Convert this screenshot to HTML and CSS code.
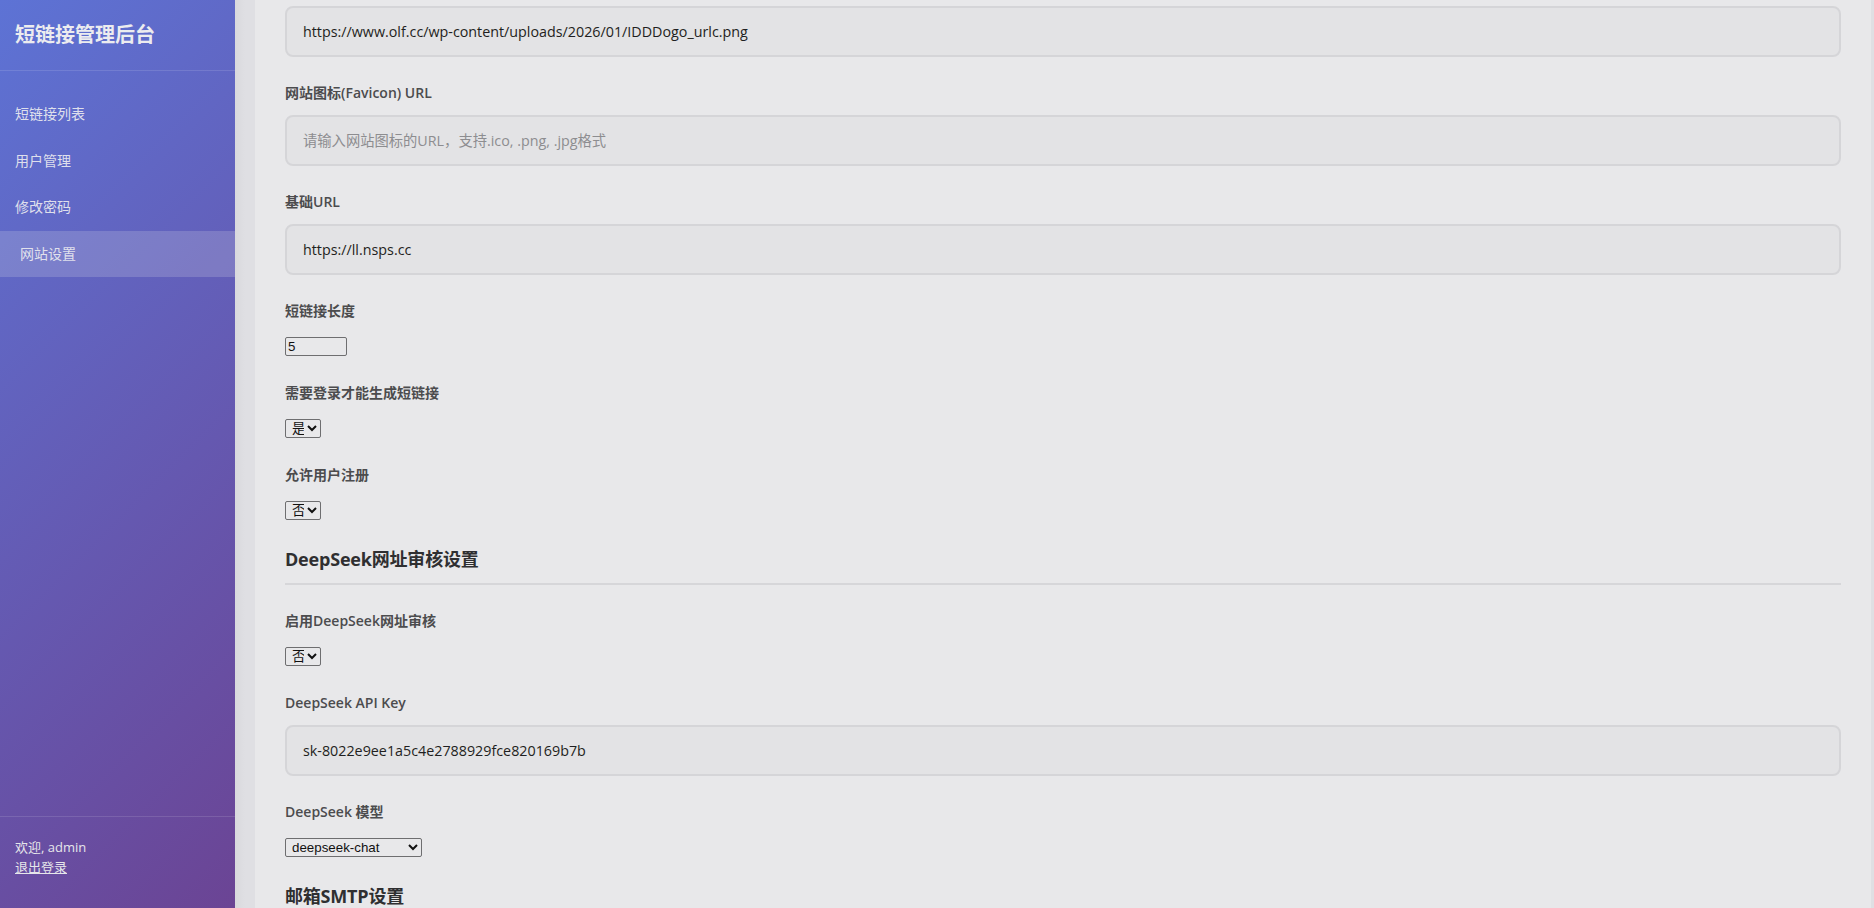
FILE: index.html
```html
<!DOCTYPE html>
<html lang="zh-CN">
<head>
<meta charset="utf-8">
<title>网站设置 - 短链接管理后台</title>
<link rel="stylesheet" href="styles.css">
</head>
<body>
  <aside class="sidebar">
    <div class="sidebar-header">
      <h2 class="brand">短链接管理后台</h2>
    </div>
    <nav class="menu">
      <a class="menu-item" href="#">短链接列表</a>
      <a class="menu-item" href="#">用户管理</a>
      <a class="menu-item" href="#">修改密码</a>
      <a class="menu-item active" href="#">网站设置</a>
    </nav>
    <div class="sidebar-footer">
      <div class="welcome">欢迎, admin</div>
      <a class="logout" href="#">退出登录</a>
    </div>
  </aside>

  <main class="main">
    <div class="card">
      <div class="form-group">
        <input class="text-input" type="text" value="https://www.olf.cc/wp-content/uploads/2026/01/IDDDogo_urlc.png">
      </div>

      <div class="form-group">
        <label class="field-label">网站图标(Favicon) URL</label>
        <input class="text-input" type="text" placeholder="请输入网站图标的URL，支持.ico, .png, .jpg格式">
      </div>

      <div class="form-group">
        <label class="field-label">基础URL</label>
        <input class="text-input" type="text" value="https://ll.nsps.cc">
      </div>

      <div class="form-group compact">
        <label class="field-label">短链接长度</label>
        <input class="num-input" type="number" value="5" min="4" max="10">
      </div>

      <div class="form-group compact">
        <label class="field-label">需要登录才能生成短链接</label>
        <select class="select select-yn">
          <option selected>是</option>
          <option>否</option>
        </select>
      </div>

      <div class="form-group compact">
        <label class="field-label">允许用户注册</label>
        <select class="select select-yn">
          <option>是</option>
          <option selected>否</option>
        </select>
      </div>

      <h3 class="section-title">DeepSeek网址审核设置</h3>

      <div class="form-group compact">
        <label class="field-label">启用DeepSeek网址审核</label>
        <select class="select select-yn">
          <option>是</option>
          <option selected>否</option>
        </select>
      </div>

      <div class="form-group">
        <label class="field-label">DeepSeek API Key</label>
        <input class="text-input" type="text" value="sk-8022e9ee1a5c4e2788929fce820169b7b">
      </div>

      <div class="form-group compact">
        <label class="field-label">DeepSeek 模型</label>
        <select class="select select-model">
          <option selected>deepseek-chat</option>
          <option>deepseek-reasoner</option>
        </select>
      </div>

      <h3 class="section-title">邮箱SMTP设置</h3>
    </div>
  </main>
</body>
</html>
```

FILE: styles.css
```css
* {
  box-sizing: border-box;
}

html, body {
  height: 100%;
  overflow: hidden;
}

body {
  margin: 0;
  display: flex;
  font-family: "Open Sans", "Noto Sans CJK SC", sans-serif;
  background: #dedee2;
  color: #2e2e30;
}

/* ---------- Sidebar ---------- */
.sidebar {
  width: 235px;
  flex-shrink: 0;
  height: 100vh;
  display: flex;
  flex-direction: column;
  background: linear-gradient(135deg, #5d73d5 0%, #6b4494 100%);
  color: #e8e8ea;
}

.sidebar-header {
  padding: 20px 15px;
  border-bottom: 1px solid rgba(255, 255, 255, 0.12);
}

.brand {
  margin: 0;
  font-size: 20px;
  line-height: 30px;
  font-weight: 700;
  color: #ececef;
}

.menu {
  display: flex;
  flex-direction: column;
  padding-top: 20px;
}

.menu-item {
  display: block;
  padding: 15px;
  font-size: 14px;
  line-height: 16.5px;
  color: rgba(236, 236, 240, 0.92);
  text-decoration: none;
}

.menu-item.active {
  padding-left: 20px;
  background: rgba(232, 232, 234, 0.2);
}

.sidebar-footer {
  margin-top: auto;
  padding: 20px 15px 31px;
  border-top: 1px solid rgba(255, 255, 255, 0.12);
  font-size: 13px;
  line-height: 20px;
  color: #e6e6ea;
}

.logout {
  color: #e6e6ea;
  text-decoration: underline;
}

/* ---------- Main ---------- */
.main {
  flex: 1;
  min-width: 0;
  padding: 0 3px 0 20px;
  background: linear-gradient(90deg, #d9d9dd 0px, #dfdfe3 10px, #dfdfe3 100%);
}

.card {
  height: 100%;
  padding: 6px 30px 0;
  background: #e8e8ea;
}

.form-group {
  margin-bottom: 25px;
}

.form-group.compact {
  margin-bottom: 26px;
}

.field-label {
  display: block;
  margin-bottom: 12px;
  font-size: 14px;
  line-height: 21px;
  font-weight: 600;
  color: #4c4c4e;
}

.compact .field-label {
  margin-bottom: 16px;
}

.text-input {
  display: block;
  width: 100%;
  height: 51px;
  padding: 14px 14px 14px 16px;
  border: 2px solid #d5d5d8;
  border-radius: 8px;
  background: #e3e3e5;
  font-family: "Open Sans", "Noto Sans CJK SC", sans-serif;
  font-size: 14.3px;
  line-height: 19px;
  color: #1f1f21;
  outline: none;
}

.text-input::placeholder {
  color: #8d8d90;
}

.num-input {
  display: block;
  width: 62px;
  height: 19px;
  padding: 0 2px;
  border: 1px solid #6e6e70;
  border-radius: 2px;
  background: #e8e8ea;
  font-family: "Liberation Sans", "Noto Sans CJK SC", sans-serif;
  font-size: 13.33px;
  color: #111;
}

.select {
  display: block;
  height: 19px;
  padding: 0 0 0 2px;
  border: 1px solid #6e6e70;
  border-radius: 2px;
  background-color: #e8e8ea;
  font-family: "Liberation Sans", "Noto Sans CJK SC", sans-serif;
  font-size: 13.33px;
  color: #111;
}

.select-yn {
  width: 36px;
}

.select-model {
  width: 137px;
}

.section-title {
  margin: 0 0 25px;
  padding-bottom: 10px;
  border-bottom: 2px solid #d6d6d9;
  font-size: 18px;
  line-height: 27px;
  font-weight: 700;
  letter-spacing: -0.2px;
  color: #2f2f31;
}
```
